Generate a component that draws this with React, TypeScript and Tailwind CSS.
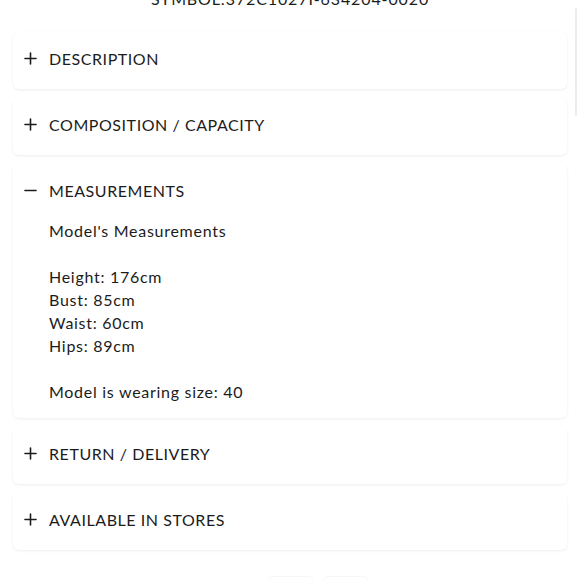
import { Minus, Plus } from "lucide-react";

const sections = [
  { title: "DESCRIPTION" },
  { title: "COMPOSITION / CAPACITY" },
  {
    title: "MEASUREMENTS",
    open: true,
    lines: [
      "Model's Measurements",
      "",
      "Height: 176cm",
      "Bust: 85cm",
      "Waist: 60cm",
      "Hips: 89cm",
      "",
      "Model is wearing size: 40",
    ],
  },
  { title: "RETURN / DELIVERY" },
  { title: "AVAILABLE IN STORES" },
];

export default function App() {
  return (
    <div
      className="relative h-[580px] w-[580px] overflow-hidden bg-white text-[#1c1c1c]"
      style={{ fontFamily: "Lato, 'Liberation Sans', sans-serif" }}
    >
      <div className="absolute right-[3px] top-[8px] h-[108px] w-[2px] rounded-full bg-[#ececec]" />

      <p className="mt-[-9px] h-[14px] text-center text-[16px] leading-[16px] tracking-[0.055em]">
        SYMBOL:372C1027I-634204-0020
      </p>

      <div className="mt-[27px] flex flex-col gap-[9px] px-[13px]">
        {sections.map((s) => (
          <div
            key={s.title}
            className="rounded-[6px] bg-white shadow-[0_1px_3px_rgba(0,0,0,0.07)]"
          >
            <div
              className={`flex items-center gap-[9px] pl-[8px] ${s.open ? "h-[55px] pb-[2px]" : "h-[57px] pb-[4px]"}`}
            >
              {s.open ? (
                <Minus className="h-[19px] w-[19px]" strokeWidth={2} />
              ) : (
                <Plus className="h-[19px] w-[19px]" strokeWidth={2} />
              )}
              <span className="text-[16px] tracking-[0.035em]">{s.title}</span>
            </div>
            {s.lines && (
              <div className="pb-[15px] pl-[36px] text-[16px] leading-[23px] tracking-[0.045em]">
                {s.lines.map((l, i) => (
                  <div key={i} className="h-[23px]">
                    {l}
                  </div>
                ))}
              </div>
            )}
          </div>
        ))}
      </div>

      <div className="mt-[27px] flex justify-center gap-[13px] pl-[56px]">
        <div className="h-[20px] w-[42px] rounded-[3px] bg-white shadow-[0_0_2px_rgba(0,0,0,0.12)]" />
        <div className="h-[20px] w-[42px] rounded-[3px] bg-white shadow-[0_0_2px_rgba(0,0,0,0.12)]" />
      </div>
    </div>
  );
}
